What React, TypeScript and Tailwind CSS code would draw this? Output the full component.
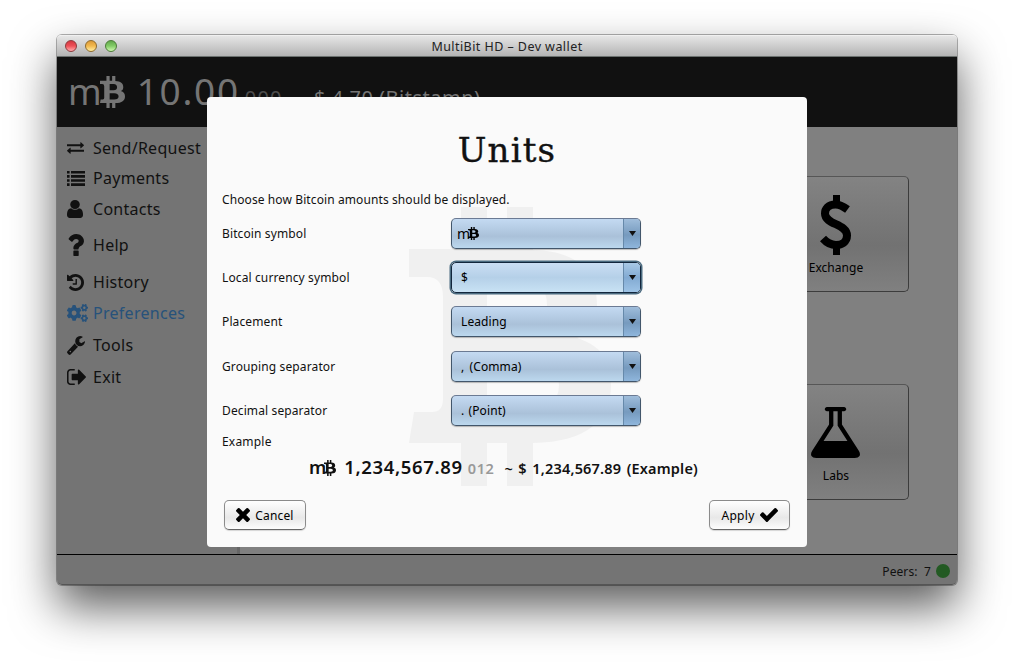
import type { ReactNode } from "react";
import { FaCogs } from "react-icons/fa";

type GlyphProps = { className: string; viewBox: string; d: string };

function Glyph({ className, viewBox, d }: GlyphProps) {
  return (
    <svg className={className} viewBox={viewBox} preserveAspectRatio="none" fill="currentColor" aria-hidden="true">
      <path d={d} />
    </svg>
  );
}

const BITCOIN =
  "M52 0h26v42h20v-42h26v43C166 44 188 62 188 98C188 116 182 125 168 131C192 139 202 152 202 178C202 213 178 235 124 236v43h-26v-43h-20v43h-26v-43H0L5 205H23Q34 205 34 192V90Q34 70 18 70H0V42H52zM78 70V124H110Q138 123 138 98T110 70zM78 151V205H115Q150 203 150 178T115 151z";

function Bitcoin({ className }: { className: string }) {
  return <Glyph className={className} viewBox="0 0 202 279" d={BITCOIN} />;
}

const EXCHANGE =
  "M1792 1184v192q0 13-9.5 22.5t-22.5 9.5h-1376v192q0 13-9.5 22.5t-22.5 9.5q-12 0-24-10l-319-320q-9-9-9-22 0-14 9-23l320-320q9-9 23-9 13 0 22.5 9.5t9.5 22.5v192h1376q13 0 22.5 9.5t9.5 22.5zm0-544q0 14-9 23l-320 320q-9 9-23 9-13 0-22.5-9.5t-9.5-22.5v-192h-1376q-13 0-22.5-9.5t-9.5-22.5v-192q0-13 9.5-22.5t22.5-9.5h1376v-192q0-14 9-23t23-9q12 0 24 10l319 319q9 9 9 23z";
const LIST =
  "M0 0h2.6v2.6H0zM4 0h14v2.6H4zM0 4.1h2.6v2.6H0zM4 4.1h14v2.6H4zM0 8.2h2.6v2.6H0zM4 8.2h14v2.6H4zM0 12.3h2.6v2.6H0zM4 12.3h14v2.6H4z";
const USER =
  "M1536 1399q0 109-62.5 187t-150.5 78h-854q-88 0-150.5-78t-62.5-187q0-85 8.5-160.5t31.5-152 58.5-131 94-89 134.5-34.5q131 128 313 128t313-128q76 0 134.5 34.5t94 89 58.5 131 31.5 152 8.5 160.5zm-256-887q0 159-112.5 271.5t-271.5 112.5-271.5-112.5-112.5-271.5 112.5-271.5 271.5-112.5 271.5 112.5 112.5 271.5z";
const QUESTION =
  "M1088 1256v240q0 16-12 28t-28 12h-240q-16 0-28-12t-12-28v-240q0-16 12-28t28-12h240q16 0 28 12t12 28zm316-600q0 54-15.5 101t-35 76.5-55 59.5-57.5 43.5-61 35.5q-41 23-68.5 65t-27.5 67q0 17-12 32.5t-28 15.5h-240q-15 0-25.5-18.5t-10.5-37.5v-45q0-83 65-156.5t143-108.5q59-27 84-56t25-76q0-42-46.5-74t-107.5-32q-65 0-108 29-35 25-107 115-13 16-31 16-12 0-25-8l-164-125q-13-10-15.5-25t5.5-28q160-266 464-266 80 0 161 31t146 83 106 127.5 41 158.5z";
const HISTORY =
  "M1664 896q0 156-61 298t-164 245-245 164-298 61q-172 0-327-72.5t-264-204.5q-7-10-6.5-22.5t8.5-20.5l137-138q10-9 25-9 16 2 23 12 73 95 179 147t225 52q104 0 198.5-40.5t163.5-109.5 109.5-163.5 40.5-198.5-40.5-198.5-109.5-163.5-163.5-109.5-198.5-40.5q-98 0-188 35.5t-160 101.5l137 138q31 30 14 69-17 40-59 40h-448q-26 0-45-19t-19-45v-448q0-42 40-59 39-17 69 14l130 129q107-101 244.5-156.5t284.5-55.5q156 0 298 61t245 164 164 245 61 298zm-640-288v448q0 14-9 23t-23 9h-320q-14 0-23-9t-9-23v-64q0-14 9-23t23-9h224v-352q0-14 9-23t23-9h64q14 0 23 9t9 23z";
const WRENCH =
  "M448 1472q0-26-19-45t-45-19-45 19-19 45 19 45 45 19 45-19 19-45zm644-420l-682 682q-37 37-90 37-52 0-91-37l-106-108q-38-36-38-90 0-53 38-91l681-681q39 98 114.5 173.5t173.5 114.5zm634-435q0 39-23 106-47 134-164.5 217.5t-258.5 83.5q-185 0-316.5-131.5t-131.5-316.5 131.5-316.5 316.5-131.5q58 0 121.5 16.5t107.5 46.5q16 11 16 28t-16 28l-293 169v224l193 107q5-3 79-48.5t135.5-81 70.5-35.5q15 0 23.5 10t8.5 25z";
const EXIT =
  "M704 1440q0 4 1 20t.5 26.5-3 23.5-10 19.5-20.5 6.5h-320q-119 0-203.5-84.5t-84.5-203.5v-704q0-119 84.5-203.5t203.5-84.5h320q13 0 22.5 9.5t9.5 22.5q0 4 1 20t.5 26.5-3 23.5-10 19.5-20.5 6.5h-320q-66 0-113 47t-47 113v704q0 66 47 113t113 47h312l11.5 1 11.5 3 8 5.5 7 9 2 13.5zm928-544q0 26-19 45l-544 544q-19 19-45 19t-45-19-19-45v-288h-448q-26 0-45-19t-19-45v-384q0-26 19-45t45-19h448v-288q0-26 19-45t45-19 45 19l544 544q19 19 19 45z";
const FLASK =
  "M1591 1448q56 89 21.5 152.5t-140.5 63.5h-1152q-106 0-140.5-63.5t21.5-152.5l503-793v-399h-64q-26 0-45-19t-19-45 19-45 45-19h512q26 0 45 19t19 45-19 45-45 19h-64v399zm-779-725l-272 429h712l-272-429-20-31v-436h-128v436z";
const TIMES =
  "M1490 1322q0 40-28 68l-136 136q-28 28-68 28t-68-28l-294-294-294 294q-28 28-68 28t-68-28l-136-136q-28-28-28-68t28-68l294-294-294-294q-28-28-28-68t28-68l136-136q28-28 68-28t68 28l294 294 294-294q28-28 68-28t68 28l136 136q28 28 28 68t-28 68l-294 294 294 294q28 28 28 68z";
const CHECK =
  "M1671 566q0 40-28 68l-724 724-136 136q-28 28-68 28t-68-28l-136-136-362-362q-28-28-28-68t28-68l136-136q28-28 68-28t68 28l294 295 656-657q28-28 68-28t68 28l136 136q28 28 28 68z";

function NavItem({ icon, label, className }: { icon: ReactNode; label: string; className: string }) {
  return (
    <li className={`flex h-[22px] items-center ${className}`}>
      <span className="flex w-[26px] shrink-0 items-center">{icon}</span>
      <span className="text-[16px] leading-[22px] tracking-[0.28px]">{label}</span>
    </li>
  );
}

function Select({ children, focused }: { children: ReactNode; focused?: boolean }) {
  return (
    <div
      className={
        focused
          ? "flex h-[31px] w-[190px] overflow-hidden rounded-[5px] border border-[#12263c] bg-linear-to-b from-[#cadef4] via-[#b5d0e8] to-[#c8e2f4] shadow-[0_0_0_1.5px_#4a6b80]"
          : "flex h-[31px] w-[190px] overflow-hidden rounded-[5px] border border-[#42566b] border-t-[#6b7a93] bg-linear-to-b from-[#c4daf2] via-[#aac1d9] via-60% to-[#bcd8ee] shadow-[0_1px_1px_rgba(0,0,0,0.25)]"
      }
    >
      <div className="flex flex-1 items-center pl-[9px] text-[12px] tracking-[0.1px] text-black">{children}</div>
      <div
        className={
          focused
            ? "flex w-[17px] items-center justify-center border-l border-[#6689aa] bg-linear-to-b from-[#a9c9e6] via-[#82aad2] to-[#9dc3e6]"
            : "flex w-[17px] items-center justify-center border-l border-[#6689aa] bg-linear-to-b from-[#9fbddb] via-[#769abe] via-55% to-[#8fb6dc]"
        }
      >
        <svg className="h-[5px] w-[7px]" viewBox="0 0 7 5" aria-hidden="true">
          <path d="M0 0h7L3.5 5z" fill="#111" />
        </svg>
      </div>
    </div>
  );
}

function Row({ label, className, children }: { label: string; className: string; children: ReactNode }) {
  return (
    <div className={`flex h-[31px] items-center ${className}`}>
      <span className="w-[229px] text-[12px] tracking-[0.12px]">{label}</span>
      {children}
    </div>
  );
}

function Tile({ icon, label }: { icon: ReactNode; label: string }) {
  return (
    <div className="flex h-[116px] w-[146px] flex-col items-center rounded-[5px] border border-[#3c3c3c] border-t-[#565656] bg-linear-to-b from-[#838383] via-[#727272] via-60% to-[#808080] text-black">
      <div className="flex h-[80px] items-end justify-center">{icon}</div>
      <span className="mt-[2px] text-[12px] leading-[18px] tracking-[0.05px]">{label}</span>
    </div>
  );
}

const BUTTON =
  "flex h-[30px] items-center justify-center rounded-[5px] border border-[#8b8b8b] border-b-[#666] bg-linear-to-b from-white via-[#e8e8e8] via-60% to-[#fdfdfd] text-[12px] text-black shadow-[0_1px_1px_rgba(0,0,0,0.15)]";

export default function App() {
  return (
    <div className="h-[664px] w-[1014px] overflow-hidden bg-white pt-[35px] pl-[57px] font-['Noto_Sans','Open_Sans',sans-serif] text-[#111]">
      <div className="relative flex h-[550px] w-[900px] flex-col rounded-[5px] shadow-[0_0_0_1px_rgba(0,0,0,0.3),0_22px_46px_rgba(0,0,0,0.64)]">
        <header className="flex h-[22px] shrink-0 items-center rounded-t-[4px] border-t border-b border-t-[#f0f0f0] border-b-[#6b716f] bg-linear-to-b from-[#e6e6e6] to-[#b4b4b4] pl-[8px]">
          <div className="flex gap-[8px]">
            <span className="size-[12px] rounded-full border border-[#8c3a3c] bg-linear-to-b from-[#d3383f] via-[#ee5058] to-[#ffaaae]" />
            <span className="size-[12px] rounded-full border border-[#8d6a2c] bg-linear-to-b from-[#dc9a37] via-[#f2b94e] to-[#fff0a0]" />
            <span className="size-[12px] rounded-full border border-[#4b7b37] bg-linear-to-b from-[#62a84b] via-[#83cc67] to-[#cffab0]" />
          </div>
          <h1 className="flex-1 pt-[2px] pr-[60px] text-center text-[12.5px] tracking-[0.44px] text-[#222]">MultiBit HD – Dev wallet</h1>
        </header>

        <div className="flex h-[70px] shrink-0 items-baseline bg-[#111] pl-[11px] leading-[67px] text-[#757575]">
          <span className="text-[36px]">m</span>
          <Bitcoin className="-ml-[2px] h-[32px] w-[25px] translate-y-[3px]" />
          <span className="ml-[12px] text-[37px] tracking-[1.7px]">10.00</span>
          <span className="ml-[5px] text-[20px] tracking-[1.2px] text-[#4c4c4c]">000</span>
          <span className="ml-[8px] text-[20px] tracking-[0.5px] whitespace-pre">~  $ 4.70 (Bitstamp)</span>
        </div>

        <div className="flex h-[427px] shrink-0">
          <nav className="w-[180px] bg-[#747474] pt-[10px] pl-[10px] text-[#111]">
            <ul>
              <NavItem className="" label="Send/Request" icon={<Glyph className="h-[12px] w-[17px]" viewBox="0 256 1792 1408" d={EXCHANGE} />} />
              <NavItem className="mt-[8px]" label="Payments" icon={<Glyph className="h-[15px] w-[18px]" viewBox="0 0 18 15" d={LIST} />} />
              <NavItem className="mt-[9px]" label="Contacts" icon={<Glyph className="h-[18px] w-[16px]" viewBox="256 128 1280 1536" d={USER} />} />
              <NavItem className="mt-[14px]" label="Help" icon={<Glyph className="h-[22px] w-[17px]" viewBox="384 256 1024 1280" d={QUESTION} />} />
              <NavItem className="mt-[15px]" label="History" icon={<Glyph className="h-[17px] w-[17px]" viewBox="128 128 1536 1536" d={HISTORY} />} />
              <NavItem className="mt-[9px] text-[#27527b]" label="Preferences" icon={<FaCogs className="h-[18px] w-[21px]" preserveAspectRatio="none" />} />
              <NavItem className="mt-[10px]" label="Tools" icon={<Glyph className="h-[19px] w-[18px]" viewBox="80 128 1650 1650" d={WRENCH} />} />
              <NavItem className="mt-[10px]" label="Exit" icon={<Glyph className="h-[16px] w-[19px]" viewBox="64 256 1568 1280" d={EXIT} />} />
            </ul>
          </nav>
          <div className="w-[3px] bg-[#666]" />
          <main className="flex flex-1 flex-col items-end gap-[92px] bg-[#808080] pt-[49px] pr-[48px]">
            <Tile
              label="Exchange"
              icon={
                <svg className="mb-[2px] h-[60px] w-[32px]" viewBox="0 0 32 60" aria-hidden="true">
                  <path d="M13 0h7v9h-7zM13 51h7v9h-7z" fill="black" />
                  <path
                    d="M27.5 14.5C22 10.5 19 9.5 15.5 9.5C8 9.5 5 14 5 18.5C5 30 27 28.5 27 40.5C27 47 21.5 50 16 50C10.5 50 6.5 47.5 3 43.5"
                    fill="none"
                    stroke="black"
                    strokeWidth="8"
                  />
                </svg>
              }
            />
            <Tile label="Labs" icon={<Glyph className="mr-[1px] mb-[7px] h-[51px] w-[49px]" viewBox="165 128 1462 1536" d={FLASK} />} />
          </main>
        </div>

        <footer className="flex flex-1 items-center justify-end rounded-b-[5px] border-t border-b border-t-black border-b-[#555] bg-[#747474] pt-[2px] pr-[7px] text-[12px]">
          <span className="pt-[2px] tracking-[0.1px]">Peers:&nbsp; 7</span>
          <span className="ml-[5px] size-[14px] rounded-full bg-[#235a23]" />
        </footer>

        <section
          role="dialog"
          className="absolute top-[62px] left-[150px] h-[450px] w-[600px] overflow-hidden rounded-[4px] bg-[#fafafa]"
        >
          <Bitcoin className="absolute top-[110px] left-[202px] h-[279px] w-[202px] text-[#f0f0f0]" />
          <div className="relative flex h-full flex-col px-[15px] text-[#111]">
            <h2 className="mt-[30px] h-[46px] text-center font-['DejaVu_Serif',serif] text-[34px] leading-[46px] tracking-[1.2px] [-webkit-text-stroke:0.4px_#111]">Units</h2>
            <p className="mt-[18px] h-[18px] text-[12px] leading-[18px] tracking-[0.1px]">Choose how Bitcoin amounts should be displayed.</p>
            <Row label="Bitcoin symbol" className="mt-[9px]">
              <Select>
                <span className="-ml-[4px] text-[14px]">m</span>
                <Bitcoin className="-ml-[2px] h-[13px] w-[11px]" />
              </Select>
            </Row>
            <Row label="Local currency symbol" className="mt-[13px]">
              <Select focused>$</Select>
            </Row>
            <Row label="Placement" className="mt-[13px]">
              <Select>Leading</Select>
            </Row>
            <Row label="Grouping separator" className="mt-[14px]">
              <Select><span className="[word-spacing:2px]">, (Comma)</span></Select>
            </Row>
            <Row label="Decimal separator" className="mt-[13px]">
              <Select><span className="[word-spacing:1px]">. (Point)</span></Select>
            </Row>
            <p className="mt-[7px] h-[18px] text-[12px] leading-[18px] tracking-[0.2px]">Example</p>
            <div className="mt-[2px] mb-[2px] flex h-[28px] items-baseline pl-[87px] font-semibold">
              <span className="text-[18px]">m</span>
              <Bitcoin className="-ml-[2px] h-[16px] w-[12px] translate-y-[2px]" />
              <span className="ml-[8px] text-[18.5px] tracking-[0.65px]">1,234,567.89</span>
              <span className="ml-[5px] text-[14.5px] tracking-[0.6px] text-[#999]">012</span>
              <span className="ml-[10px] text-[14.5px] tracking-[0.18px] [word-spacing:1.5px]">~ $ 1,234,567.89 (Example)</span>
            </div>
            <div className="mt-[17px] flex justify-between pr-[2px] pl-[2px]">
              <button className={`${BUTTON} w-[82px] gap-[5px]`}>
                <Glyph className="size-[14px]" viewBox="302 366 1188 1188" d={TIMES} />
                <span className="pt-[2px] tracking-[0.15px]">Cancel</span>
              </button>
              <button className={`${BUTTON} w-[81px] gap-[5px]`}>
                <span className="pt-[2px] tracking-[0.3px]">Apply</span>
                <Glyph className="h-[14px] w-[18px]" viewBox="121 334 1550 1188" d={CHECK} />
              </button>
            </div>
          </div>
        </section>
      </div>
    </div>
  );
}
